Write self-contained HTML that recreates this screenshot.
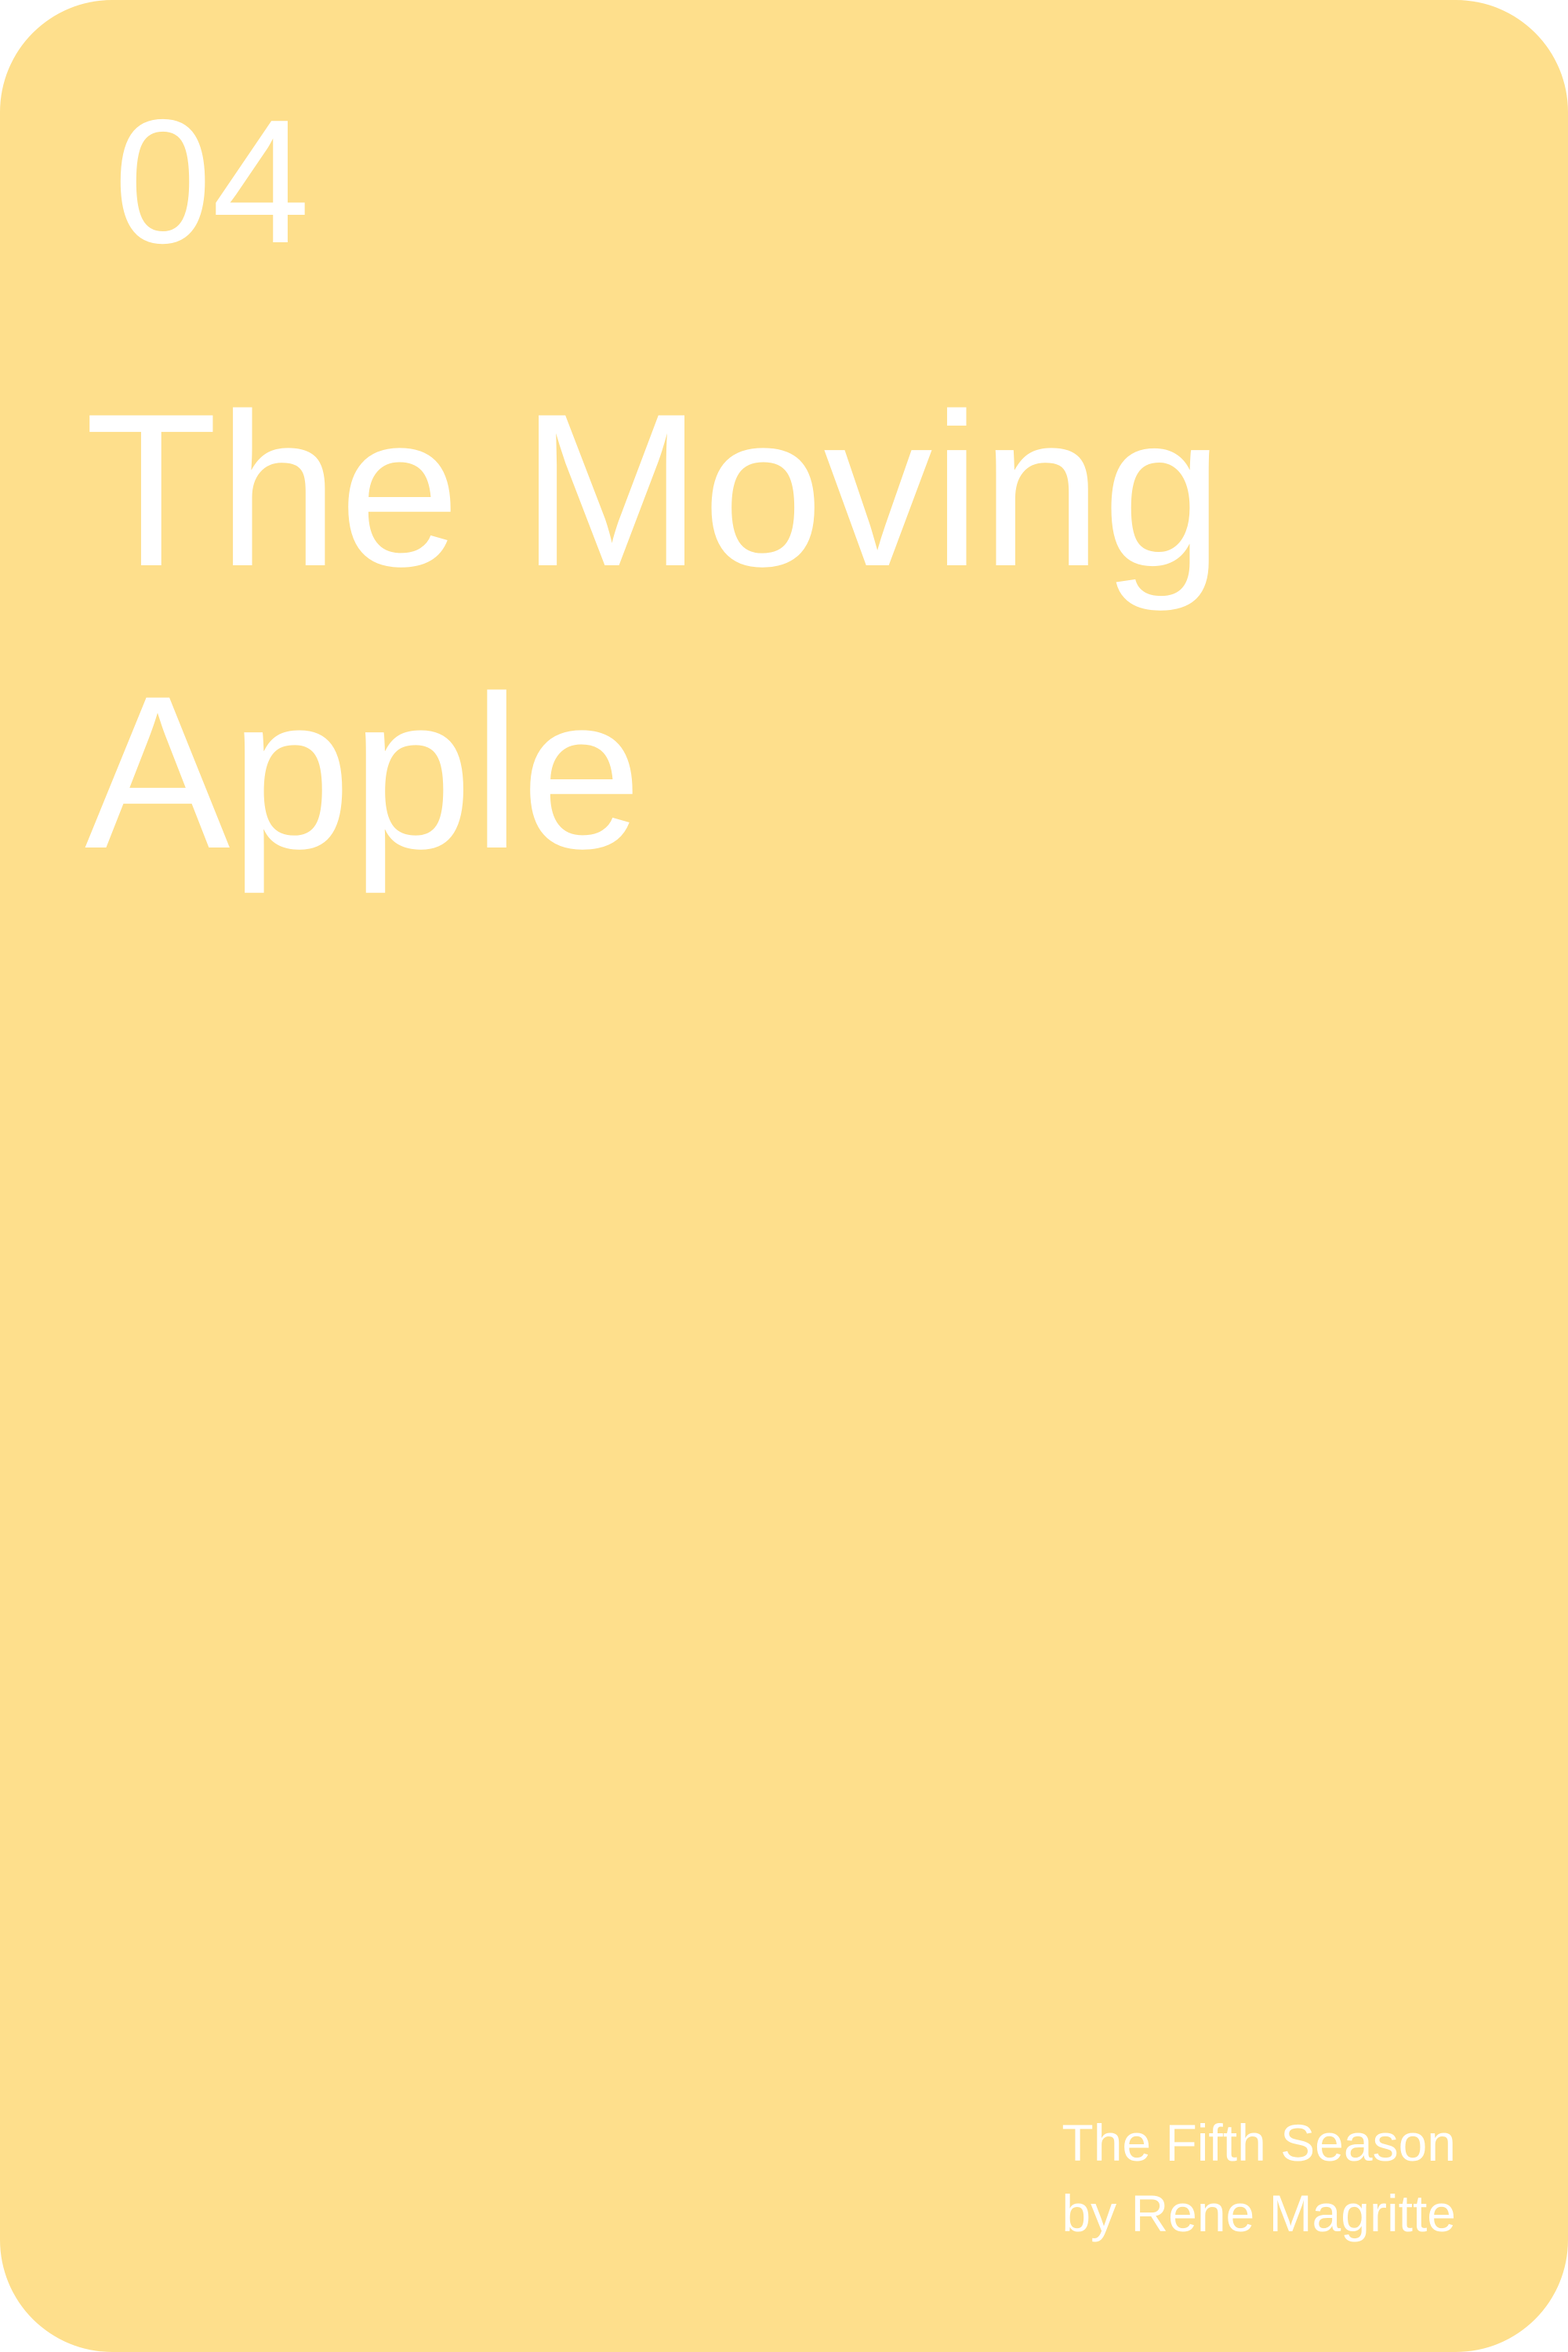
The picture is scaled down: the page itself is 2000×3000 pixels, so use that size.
<!DOCTYPE html>
<html><head><meta charset="utf-8"><style>
html,body{margin:0;padding:0;background:#fff;}
.card{position:relative;width:2000px;height:3000px;background:#FEDF8C;border-radius:143px;overflow:hidden;font-family:"Liberation Sans",sans-serif;color:#fff;}
.num{position:absolute;left:145px;top:119px;font-size:225px;line-height:225px;}
.title{position:absolute;left:108px;top:445px;font-size:278px;line-height:360px;}
.foot{position:absolute;right:143px;top:2688px;font-size:66px;line-height:90px;text-align:right;}
</style></head><body>
<div class="card">
<div class="num">04</div>
<div class="title">The Moving<br>Apple</div>
<div class="foot">The Fifth Season<br>by Rene Magritte</div>
</div>
</body></html>
